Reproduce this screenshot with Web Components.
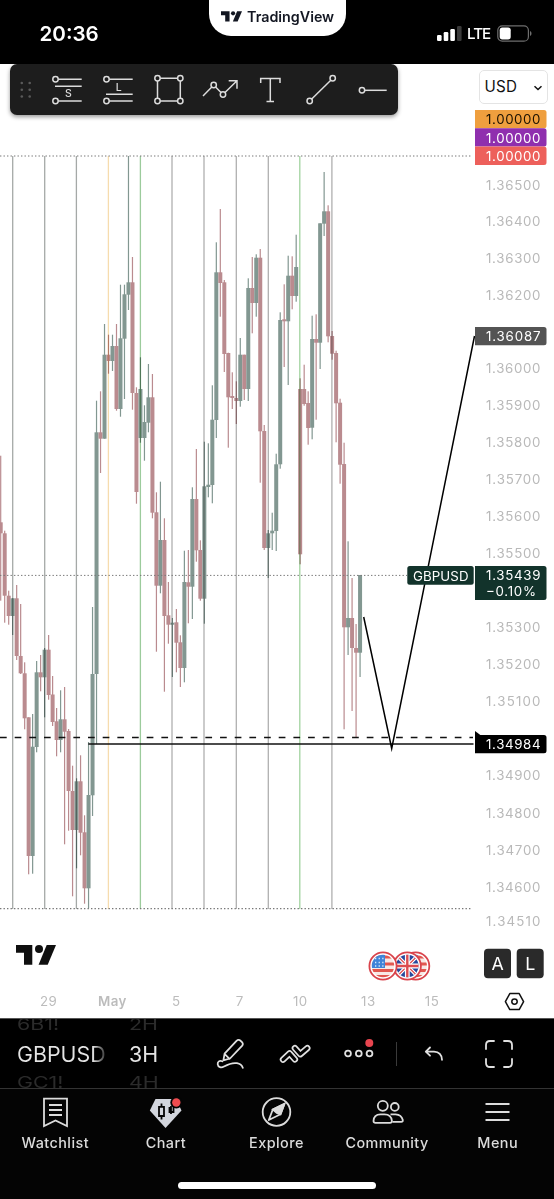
<!DOCTYPE html>
<html lang="en">
<head>
<meta charset="utf-8">
<title>GBPUSD chart</title>
<style>
    html, body { margin: 0; padding: 0; background: #fff; }
    body { width: 554px; height: 1199px; overflow: hidden; font-family: Inter, "Liberation Sans", sans-serif; }
</style>
</head>
<body>
<trading-app></trading-app>

<script>
const TV_LOGO = `
    <path d="M0 0H16.3V19.7H8V7.7H0Z"/>
    <circle cx="23" cy="4" r="4"/>
    <path d="M30.7 0H40L31.7 19.7H22.6Z"/>`;

class StatusBar extends HTMLElement {
    constructor() {
        super();
        this.attachShadow({ mode: 'open' });
    }

    connectedCallback() {
        this.shadowRoot.innerHTML = `
            <style>
                :host {
                    display: grid;
                    grid-template-columns: 209px 137px 208px;
                    height: 64px;
                    background: #000;
                    color: #fff;
                }
                .time {
                    padding: 20.5px 0 0 39.5px;
                    font-size: 20.6px;
                    line-height: 26px;
                    font-weight: 600;
                }
                .pill {
                    display: flex;
                    align-items: center;
                    gap: 5px;
                    box-sizing: border-box;
                    height: 36px;
                    padding: 0 0 3px 12px;
                    background: #fff;
                    color: #131722;
                    border-radius: 0 0 22px 22px;
                    font-size: 14.3px;
                    font-weight: 600;
                }
                .signal {
                    display: flex;
                    align-items: center;
                    gap: 5px;
                    height: 26px;
                    padding: 20px 0 0 91px;
                    font-size: 15.2px;
                    font-weight: 500;
                }
                .signal span { width: 24.5px; letter-spacing: -1px; }
                svg { display: block; flex: none; }
            </style>
            <div class="time">20:36</div>
            <div class="pill">
                <svg width="21" height="11" viewBox="0 0 40 20" fill="#131722">${TV_LOGO}</svg>
                <span>TradingView</span>
            </div>
            <div class="signal">
                <svg width="25" height="16" viewBox="0 0 25 16" fill="#fff">
                    <rect x="0" y="10" width="4.6" height="6" rx="1.2"/>
                    <rect x="6.7" y="7" width="4.6" height="9" rx="1.2"/>
                    <rect x="13.3" y="4" width="4.6" height="12" rx="1.2"/>
                    <rect x="20" y="1" width="4.6" height="15" rx="1.2" fill="#3a3a3a"/>
                </svg>
                <span>LTE</span>
                <svg width="36" height="17" viewBox="0 0 36 17">
                    <rect x="0.8" y="0.8" width="30.6" height="15.4" rx="4.5" fill="none" stroke="#6e6e6e" stroke-width="1.2"/>
                    <rect x="2.7" y="2.6" width="11" height="11.8" rx="2.6" fill="#fff"/>
                    <path d="M33 6v5c2-.8 2-4.2 0-5z" fill="#6e6e6e"/>
                </svg>
            </div>
        `;
    }
}

class DrawingToolbar extends HTMLElement {
    constructor() {
        super();
        this.attachShadow({ mode: 'open' });
    }

    connectedCallback() {
        const tools = [
            // short position
            `<path d="M16.2 15.3H39.7M13 22.3H39.7M16.2 37H39.7"/>
             <circle cx="13.5" cy="15.3" r="2.7"/><circle cx="13.5" cy="37" r="2.7"/>
             <text x="26.3" y="33.3">S</text>`,
            // long position
            `<path d="M16.2 15.3H39.7M13 30.3H39.7M16.2 37H39.7"/>
             <circle cx="13.5" cy="15.3" r="2.7"/><circle cx="13.5" cy="37" r="2.7"/>
             <text x="25.8" y="26.8">L</text>`,
            // rectangle
            `<path d="M16.2 14.3H33.5M36.3 17V34.3M33.5 37H16.2M13.5 34.3V17"/>
             <circle cx="13.5" cy="14.3" r="2.7"/><circle cx="36.3" cy="14.3" r="2.7"/>
             <circle cx="36.3" cy="37" r="2.7"/><circle cx="13.5" cy="37" r="2.7"/>`,
            // path
            `<path d="M8 32L16.8 23M20.6 23L26 28.5M30 28.5L42 16.7M33.7 16.7H42V24.7"/>
             <circle cx="18.7" cy="21" r="2.7"/><circle cx="28" cy="30.5" r="2.7"/>`,
            // text
            `<path d="M15.7 19V14.5H35V19M25.3 14.5V37.5M21.5 37.5H29"/>`,
            // trend line
            `<path d="M15.7 35L34.8 16.2"/>
             <circle cx="13.7" cy="37" r="2.7"/><circle cx="36.7" cy="14.3" r="2.7"/>`,
            // horizontal ray
            `<path d="M17.7 26.3H39.7"/><circle cx="15" cy="26.3" r="2.7"/>`
        ];

        this.shadowRoot.innerHTML = `
            <style>
                :host {
                    display: flex;
                    align-items: center;
                    width: 388px;
                    height: 51px;
                    background: #1d1d1d;
                    border-radius: 7px;
                    box-shadow: 0 2px 4px rgba(0, 0, 0, 0.4);
                }
                svg { display: block; flex: none; }
                .tool {
                    width: 50.9px;
                    height: 52px;
                    fill: none;
                    stroke: #dcdcdc;
                    stroke-width: 1.5;
                }
                text {
                    fill: #dcdcdc;
                    stroke: none;
                    font-size: 10.5px;
                    font-weight: 500;
                    text-anchor: middle;
                }
            </style>
            <svg width="32.4" height="51" viewBox="0 0 32.4 51" fill="#5a5a5a">
                ${[19, 25.7, 32.5].map(y =>
                    `<circle cx="11.8" cy="${y}" r="1.3"/><circle cx="19.7" cy="${y}" r="1.3"/>`
                ).join('')}
            </svg>
            ${tools.map(t => `<svg class="tool" viewBox="0 0 50.9 52">${t}</svg>`).join('')}
        `;
    }
}

// [direction, high, body top, body bottom, low], one bar every ~4px
const BARS = [
    ['r', 455.7, 522.3, 533.3, 600.7], ['r', 530.7, 533.3, 595.7, 622.7],
    ['r', 590.7, 595.7, 616, 624.7], ['g', 598.3, 598.3, 616, 635],
    ['r', 585, 598.3, 656, 660], ['r', 604, 656, 673.3, 674],
    ['r', 662.3, 673.3, 718.3, 729.3], ['r', 717.3, 717.3, 856, 874.3],
    ['g', 714, 746.7, 856, 873.7], ['g', 661, 672.3, 747, 752.3],
    ['r', 655, 672.3, 677.3, 691.3], ['g', 648, 649.7, 677.3, 717.3],
    ['r', 635, 649.7, 695, 699.7], ['r', 676, 694.5, 722, 726],
    ['r', 708, 721.3, 740, 756.3], ['g', 690.3, 719.3, 740, 752.3],
    ['r', 687, 719.3, 731.7, 844.3], ['r', 729, 731, 791, 830.7],
    ['r', 765.7, 791, 830, 896.3], ['g', 778.3, 781.3, 830, 868.3],
    ['r', 755.3, 781.3, 832.7, 855.3], ['r', 815.3, 832.3, 888.3, 903.7],
    ['g', 742, 795, 888.3, 908.3], ['g', 607, 674, 795.3, 816],
    ['g', 400.7, 432.3, 674, 744], ['r', 391.3, 432.3, 438.7, 473],
    ['g', 324, 354.7, 438.7, 438.7], ['r', 334.7, 354.7, 361, 373.7],
    ['g', 334.7, 346, 361, 371], ['r', 324, 346, 409, 410.7],
    ['g', 284.7, 338.3, 409, 416.7], ['g', 284.7, 294.3, 338.7, 399],
    ['g', 156, 282.3, 294.7, 310], ['r', 257, 282.3, 393, 409.7],
    ['r', 387.3, 393, 492, 503.7], ['g', 357.3, 389, 438, 442.7],
    ['g', 405.3, 422, 438, 460.7], ['g', 364, 397.3, 422.7, 432.3],
    ['r', 374, 397.3, 512.7, 518.3], ['r', 492.3, 512.3, 585.7, 651.7],
    ['g', 481.7, 540, 585.7, 593.3], ['r', 518.3, 540, 616, 691.7],
    ['r', 582, 615.3, 624.7, 643.7], ['g', 618, 622.7, 624.7, 677],
    ['r', 609, 622.3, 642.7, 672.3], ['r', 635.3, 642.3, 668, 687],
    ['g', 550.7, 582, 668, 682.3], ['r', 550, 582.3, 586.7, 623.3],
    ['g', 487.3, 499, 586.7, 619], ['r', 449, 499, 550.3, 561.7],
    ['r', 540.3, 550, 598.7, 600.7], ['g', 441.7, 486.3, 598.7, 623.7],
    ['g', 443.3, 484.7, 487, 497.3], ['g', 385.3, 419.7, 485, 503.3],
    ['g', 242.3, 272.3, 420, 438], ['r', 209, 272.3, 283, 316.7],
    ['r', 280, 282.3, 354, 372], ['r', 352.7, 353, 397.3, 447.7],
    ['r', 372.3, 396, 398, 409], ['r', 381.3, 398, 401, 424],
    ['g', 338, 354.7, 401, 406.7], ['r', 354.7, 354.7, 389, 400],
    ['g', 278.3, 288, 389, 401], ['r', 257, 288, 303, 333.3],
    ['g', 254.3, 257.7, 303, 316.7], ['r', 249, 257.7, 431.3, 482.7],
    ['r', 425, 431, 548, 550], ['g', 530, 533.3, 548, 578],
    ['g', 512.7, 530.7, 533.3, 550], ['g', 453.7, 464.3, 531, 551],
    ['g', 312.3, 320, 464.3, 468.7], ['r', 284.3, 319.3, 321.3, 367],
    ['g', 255.7, 275.7, 321.3, 385], ['r', 256.3, 275.7, 296, 309.3],
    ['g', 234.7, 267, 296, 301.7], ['r', 378.3, 389, 554.3, 564.3],
    ['r', 364.7, 389, 404, 405.7], ['r', 391.3, 403, 428, 444.7],
    ['g', 315.7, 339, 427.7, 439.3], ['r', 314.3, 339, 342.7, 419.7],
    ['g', 223.3, 223.3, 342.7, 369], ['g', 172, 211.3, 223.7, 236],
    ['r', 205.3, 211.3, 336.3, 342.3], ['r', 331, 336, 353.7, 359.7],
    ['r', 350.7, 353, 403.3, 442.3], ['r', 398.7, 402.7, 464.7, 483.7],
    ['r', 442.7, 464, 627.3, 729.3], ['g', 541.3, 618, 627.3, 655],
    ['r', 578, 618, 648, 711], ['r', 624, 648, 652.7, 737],
    ['g', 575, 575, 652.7, 677]
];

class PriceChart extends HTMLElement {
    constructor() {
        super();
        this.attachShadow({ mode: 'open' });
    }

    connectedCallback() {
        this.render();
    }

    // steps grow slightly towards the bottom, as on a log scale
    priceToY(price) {
        const n = (1.365 - price) * 1000;
        return 184.8 + n * (36.653 + 0.0163 * n);
    }

    renderBars() {
        return BARS.map(([dir, high, top, bottom, low], i) => {
            const x = 0.7 + i * 3.993;
            return `<g class="${dir}">
                <rect x="${(x - 0.6).toFixed(2)}" y="${high}" width="1.2" height="${(low - high).toFixed(1)}"/>
                <rect x="${(x - 2).toFixed(2)}" y="${top}" width="4" height="${(bottom - top).toFixed(1)}"/>
            </g>`;
        }).join('');
    }

    renderSessions() {
        const lines = [
            [12.7, '#a5a9a7'], [44.7, '#a5a9a7'], [76.4, '#a5a9a7'], [108.4, '#f6dcae'],
            [140.4, '#9ccb9c'], [172, '#b0b0b0'], [204, '#b0b0b0'], [236.3, '#b0b0b0'],
            [268.3, '#b0b0b0'], [299.8, '#a2d3a0'], [331.9, '#b0b0b0']
        ];
        return lines.map(([x, color]) =>
            `<rect class="session" x="${x - 0.65}" y="156" width="1.3" height="753" fill="${color}"/>`
        ).join('');
    }

    renderScale() {
        const prices = [1.365, 1.364, 1.363, 1.362, 1.36, 1.359, 1.358, 1.357, 1.356, 1.355,
            1.353, 1.352, 1.351, 1.349, 1.348, 1.347, 1.346, 1.3451];
        return prices.map(p => this.scaleText(p.toFixed(5), this.priceToY(p), '#b9b9b9')).join('');
    }

    scaleText(text, y, fill) {
        return `<text x="486" y="${(y + 4.9).toFixed(1)}" textLength="54.5" fill="${fill}">${text}</text>`;
    }

    renderTag(text, top, height, bg, fill) {
        return `<path d="M475 ${top}h69a2.5 2.5 0 0 1 2.5 2.5v${height - 5}a2.5 2.5 0 0 1 -2.5 2.5h-69z" fill="${bg}"/>
            ${this.scaleText(text, top + 9.5, fill)}`;
    }

    renderTimes() {
        const times = [['29', 48.7], ['May', 112.4], ['5', 176.3], ['7', 239.8], ['10', 300.3], ['13', 368.3], ['15', 432]];
        return times.map(([label, x]) =>
            `<text class="time" x="${x}" y="1005.5" ${label === 'May' ? 'font-weight="600"' : ''}>${label}</text>`
        ).join('');
    }

    renderUsFlag(x) {
        return `<g transform="translate(${x} 966)">
            <circle r="13.6" fill="#fff" stroke="#d9444c" stroke-width="1.8"/>
            <g clip-path="url(#flag)">
                <rect x="-12" y="-12" width="24" height="24" fill="#f7e9e6"/>
                <path d="M-12 -9H12M-12 -2H12M-12 4.5H12M-12 10.5H12" stroke="#e2574f" stroke-width="3.2"/>
                <rect x="-12" y="-12" width="14" height="14" fill="#3f84d8"/>
                <path d="M-8 -7.5H1M-8 -3.5H1M-8 0H1" stroke="#d9e9fa" stroke-width="1.3" stroke-dasharray="1.3 2.3"/>
            </g>
        </g>`;
    }

    renderUkFlag(x) {
        return `<g transform="translate(${x} 966)">
            <circle r="13.6" fill="#fff" stroke="#d9444c" stroke-width="1.8"/>
            <g clip-path="url(#flag)">
                <rect x="-12" y="-12" width="24" height="24" fill="#28489c"/>
                <path d="M-12 -12L12 12M12 -12L-12 12" stroke="#fff" stroke-width="3.6"/>
                <path d="M-12 -12L12 12M12 -12L-12 12" stroke="#dc4b50" stroke-width="1.3"/>
                <path d="M0 -12V12M-12 0H12" stroke="#fff" stroke-width="4.8"/>
                <path d="M0 -12V12M-12 0H12" stroke="#dc4b50" stroke-width="2.4"/>
            </g>
        </g>`;
    }

    render() {
        this.shadowRoot.innerHTML = `
            <style>
                :host { display: block; background: #fff; }
                svg { display: block; }
                .r { fill: #ba8b8f; }
                .g { fill: #829791; }
                .session { mix-blend-mode: multiply; }
                text { font-size: 13.3px; }
                .time { fill: #bcbcbc; text-anchor: middle; letter-spacing: 0.5px; }
                .key { fill: #fff; font-size: 17.8px; text-anchor: middle; }
            </style>
            <svg width="554" height="954" viewBox="0 64 554 954">
                <defs><clipPath id="flag"><circle r="11.2"/></clipPath></defs>
                ${this.renderBars()}
                ${this.renderSessions()}
                <g fill="none" stroke="#777" stroke-width="1.2" stroke-dasharray="1.4 2.1">
                    <path d="M0 156H471M0 908.7H471"/>
                    <path d="M0 575.4H407" stroke-width="1"/>
                </g>
                <path d="M0 737.4H473" stroke="#111" stroke-width="1.5" stroke-dasharray="6.7 7.97"/>
                <path d="M88.3 744H473.5" stroke="#111" stroke-width="1.7"/>
                <path d="M363.7 617L391.7 748.5L474.5 336" fill="none" stroke="#000" stroke-width="1.5" stroke-miterlimit="12"/>

                ${this.renderScale()}
                ${this.renderTag('1.00000', 110, 18.3, '#ef9f3e', '#1c1200')}
                ${this.renderTag('1.00000', 128.3, 18.3, '#8f2fae', '#fff')}
                ${this.renderTag('1.00000', 146.6, 18.3, '#ed605b', '#fff')}
                ${this.renderTag('1.36087', 327, 18.3, '#545454', '#fff')}
                ${this.renderTag('1.35439', 566, 34, '#12332b', '#fff')}
                <text x="486" y="596.4" textLength="50" fill="#fff">−0.10%</text>
                <rect x="407.3" y="566" width="66.4" height="18.8" rx="2.5" fill="#12332b"/>
                <text x="413" y="580.8" textLength="55.5" fill="#fff">GBPUSD</text>
                <path d="M475 731L483 737H475Z" fill="#000"/>
                ${this.renderTag('1.34984', 735, 18.3, '#000', '#fff')}

                <g transform="translate(16 945)" fill="#0f0f0f">${TV_LOGO}</g>
                ${this.renderUsFlag(415.7)}
                ${this.renderUkFlag(407.3)}
                ${this.renderUsFlag(383)}

                <rect x="484" y="948.7" width="27" height="29.5" rx="4" fill="#2a2a2a"/>
                <text class="key" x="497.6" y="970.1">A</text>
                <rect x="516.7" y="948.7" width="27" height="29.5" rx="4" fill="#2a2a2a"/>
                <text class="key" x="530.2" y="970.1">L</text>

                ${this.renderTimes()}
                <g fill="none" stroke="#111" stroke-width="1.5">
                    <path d="M505.4 1001.6L509.8 993.6H519.2L523.6 1001.6L519.2 1009.6H509.8Z" stroke-linejoin="round"/>
                    <circle cx="514.5" cy="1001.6" r="2.7"/>
                </g>
            </svg>
        `;
    }
}

class CurrencySelect extends HTMLElement {
    constructor() {
        super();
        this.attachShadow({ mode: 'open' });
        this.shadowRoot.innerHTML = `
            <style>
                :host {
                    display: flex;
                    align-items: center;
                    justify-content: space-between;
                    box-sizing: border-box;
                    width: 69px;
                    height: 34px;
                    padding: 0 4px 1px 4.5px;
                    background: #fff;
                    border: 1px solid #e4e4e4;
                    border-radius: 5px;
                    color: #111;
                    font-size: 15.2px;
                    letter-spacing: 0.2px;
                }
            </style>
            <slot></slot>
            <svg width="10" height="8" viewBox="0 0 10 8" fill="none" stroke="#111" stroke-width="1.5"><path d="M1.5 3.2L5 6.5L8.5 3.2"/></svg>
        `;
    }
}

// Vertical picker: previous value, current value, next value
class WheelPicker extends HTMLElement {
    constructor() {
        super();
        this.attachShadow({ mode: 'open' });
    }

    connectedCallback() {
        this.shadowRoot.innerHTML = `
            <style>
                :host {
                    display: grid;
                    grid-template-rows: 13px 44px 13px;
                    height: 70px;
                    overflow: hidden;
                    white-space: nowrap;
                    font-size: 21.4px;
                    line-height: 44px;
                    color: #e4e4e4;
                }
                .side {
                    display: flex;
                    align-items: center;
                    color: #2b2b2b;
                    line-height: 13px;
                }
                .side span { display: block; transform: scaleY(0.72); }
                .prev { padding-bottom: 3px; }
                :host([fade]) .value {
                    width: 91px;
                    background: linear-gradient(90deg, #e4e4e4 76px, #111 91px);
                    -webkit-background-clip: text;
                    background-clip: text;
                    color: transparent;
                }
            </style>
            <div class="side prev"><span>${this.getAttribute('prev')}</span></div>
            <div class="value">${this.getAttribute('value')}</div>
            <div class="side next"><span>${this.getAttribute('next')}</span></div>
        `;
    }
}

class ChartToolbar extends HTMLElement {
    constructor() {
        super();
        this.attachShadow({ mode: 'open' });
    }

    connectedCallback() {
        this.shadowRoot.innerHTML = `
            <style>
                :host {
                    display: grid;
                    grid-template-columns: 112px 70px 64px 64px 64px 11px 64px 65px;
                    box-sizing: border-box;
                    height: 71px;
                    padding-left: 17px;
                    background: #000;
                    border-bottom: 1px solid #333;
                    border-top: 1px solid #555;
                    align-items: center;
                }
                wheel-picker { align-self: start; }
                svg {
                    display: block;
                    justify-self: center;
                    fill: none;
                    stroke: #e0e0e0;
                    stroke-width: 1.8;
                    stroke-linecap: round;
                    stroke-linejoin: round;
                }
                .hollow { stroke: #000; stroke-width: 3; }
                .bold { stroke-width: 6.4; }
                .divider { width: 1px; height: 24px; background: #3a3a3a; justify-self: center; }
            </style>
            <wheel-picker fade prev="6B1!" value="GBPUSD" next="GC1!"></wheel-picker>
            <wheel-picker prev="2H" value="3H" next="4H"></wheel-picker>
            <svg width="32" height="32" viewBox="0 0 32 32">
                <path d="M8.4 22.3L9.6 15.7L21.5 2.8Q23.5 1 25.6 2.8L26.9 4Q28.7 5.9 27 7.9L15 20.5L8.4 22.3ZM9.8 16.2L14.5 20.8"/>
                <path d="M7.3 23.3C4.5 22 2.5 23.8 2.7 26.2C3 29.3 6.3 30 9 28.5C13.5 26 18 24.5 22 25.2Q26.5 26 27.8 29.8"/>
            </svg>
            <svg width="34" height="28" viewBox="0 0 34 28">
                <path class="bold" d="M5 19.6L11.6 13.4L16.9 19.4"/>
                <path class="hollow" d="M5 19.6L11.6 13.4L16.9 19.4"/>
                <path class="bold" d="M16.9 8.2L22.3 14.2L29.3 8.2"/>
                <path class="hollow" d="M16.9 8.2L22.3 14.2L29.3 8.2"/>
            </svg>
            <svg width="34" height="34" viewBox="0 0 34 34">
                <circle cx="6" cy="16.5" r="2.9"/><circle cx="16.8" cy="16.5" r="2.9"/><circle cx="27.5" cy="16.5" r="2.9"/>
                <circle cx="27.3" cy="6" r="4" fill="#e8454f" stroke="none"/>
            </svg>
            <div class="divider"></div>
            <svg width="20" height="16" viewBox="0 0 20 16">
                <path d="M6 1.5L1.8 5.6L6 9.7M2.2 5.6H10Q17.6 5.8 18 13.8"/>
            </svg>
            <svg width="28" height="28" viewBox="0 0 28 28">
                <path d="M1 9V5Q1 1 5 1H9M19 1H23Q27 1 27 5V9M27 19V23Q27 27 23 27H19M9 27H5Q1 27 1 23V19"/>
            </svg>
        `;
    }
}

class TabItem extends HTMLElement {
    constructor() {
        super();
        this.attachShadow({ mode: 'open' });
        this.shadowRoot.innerHTML = `
            <style>
                :host {
                    display: flex;
                    flex-direction: column;
                    align-items: center;
                    gap: 4px;
                    padding-top: 5px;
                    color: #dcdcdc;
                    font-size: 14.4px;
                    line-height: 20px;
                    font-weight: 500;
                    letter-spacing: 0.45px;
                }
                ::slotted(svg) { display: block; }
            </style>
            <slot name="icon"></slot>
            <slot></slot>
        `;
    }
}

class BottomTabs extends HTMLElement {
    constructor() {
        super();
        this.attachShadow({ mode: 'open' });
    }

    connectedCallback() {
        const tabs = [
            ['Watchlist', `<path d="M6 4.7H29V32L17.5 26.5L6 32ZM11 11H24M11 16H24M11 21H24"/>`],
            ['Chart', `
                <path d="M7.5 5H28L33.5 16.5L17.5 34L1.8 16.5Z" fill="#d3d6de" stroke="none"/>
                <path d="M11 12.8H16V22H11ZM13.5 9.5V12.8M13.5 22V25.5" stroke="#050505" stroke-width="1.8"/>
                <path d="M23 12V20M21.5 13V18H25.500V13" stroke="#050505" stroke-width="1.8"/>
                <circle cx="28.3" cy="8.5" r="6" fill="#050505" stroke="none"/>
                <circle cx="28.3" cy="8.5" r="4.2" fill="#f04c50" stroke="none"/>`],
            ['Explore', `
                <circle cx="17.5" cy="18" r="13.8"/>
                <path d="M25.5 9.8L21.5 20.3L9.8 26L13.8 15.5Z" stroke-linejoin="round"/>
                <path d="M25.5 9.8L21.5 20.3L17.8 19L13.8 15.5Z" fill="#dcdcdc"/>`],
            ['Community', `
                <circle cx="12.8" cy="11.8" r="5"/><circle cx="24.8" cy="12.9" r="3.9"/>
                <path d="M3.5 27C3.7 22 6.5 20.3 10.5 20.3H14.5C18.5 20.3 21.5 22 21.9 27Q21.9 28.8 20 28.8H5.5Q3.5 28.8 3.5 27Z"/>
                <path d="M20.5 20.3H25.5Q31.5 20.5 32.8 26Q33 27.8 31.3 27.8H22.5"/>`],
            ['Menu', `<path d="M5.5 10H29.5M5.5 18H29.5M5.5 26H29.5"/>`]
        ];

        this.shadowRoot.innerHTML = `
            <style>
                :host {
                    display: flex;
                    flex-direction: column;
                    align-items: center;
                    justify-content: space-between;
                    box-sizing: border-box;
                    height: 110px;
                    padding-bottom: 10.5px;
                    background: #040404;
                }
                nav { display: grid; grid-template-columns: repeat(5, 110.6px); width: 554px; }
                .home { width: 198px; height: 6.5px; border-radius: 4px; background: #fff; }
            </style>
            <nav>
                ${tabs.map(([label, icon]) => `
                    <tab-item>
                        <svg slot="icon" width="35" height="35" viewBox="0 0 35 35" fill="none" stroke="#dcdcdc" stroke-width="1.8">${icon}</svg>
                        ${label}
                    </tab-item>
                `).join('')}
            </nav>
            <div class="home"></div>
        `;
    }
}

class TradingApp extends HTMLElement {
    constructor() {
        super();
        this.attachShadow({ mode: 'open' });
    }

    connectedCallback() {
        this.shadowRoot.innerHTML = `
            <style>
                :host { display: grid; grid-template-rows: 64px 954px 71px 110px; width: 554px; }
                .pane { position: relative; }
                /* floating controls over the chart */
                drawing-toolbar { position: absolute; left: 9.5px; top: 0; }
                currency-select { position: absolute; right: 6px; top: 6px; }
            </style>
            <status-bar></status-bar>
            <div class="pane">
                <price-chart></price-chart>
                <drawing-toolbar></drawing-toolbar>
                <currency-select>USD</currency-select>
            </div>
            <chart-toolbar></chart-toolbar>
            <bottom-tabs></bottom-tabs>
        `;
    }
}

customElements.define('status-bar', StatusBar);
customElements.define('drawing-toolbar', DrawingToolbar);
customElements.define('price-chart', PriceChart);
customElements.define('currency-select', CurrencySelect);
customElements.define('wheel-picker', WheelPicker);
customElements.define('chart-toolbar', ChartToolbar);
customElements.define('tab-item', TabItem);
customElements.define('bottom-tabs', BottomTabs);
customElements.define('trading-app', TradingApp);
</script>
</body>
</html>
